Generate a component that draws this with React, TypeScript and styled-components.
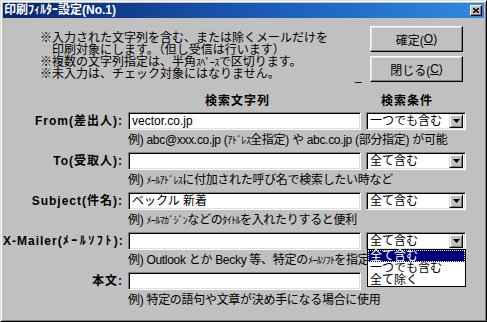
import React from 'react';
import styled, { createGlobalStyle } from 'styled-components';

const GlobalStyle = createGlobalStyle`
  html, body {
    margin: 0;
    padding: 0;
    background: #c0c0c0;
  }
  body {
    font-family: "Liberation Sans", "Noto Sans CJK JP", sans-serif;
    font-size: 12px;
    color: #000;
  }
`;

const Window = styled.div`
  box-sizing: border-box;
  width: 487px;
  height: 322px;
  display: flex;
  flex-direction: column;
  padding: 2px;
  background: #c0c0c0;
  border: 1px solid;
  border-color: #dfdfdf #000 #000 #dfdfdf;
  box-shadow: inset 1px 1px #fff, inset -1px -1px #808080;
  overflow: hidden;
`;

const TitleBar = styled.div`
  display: flex;
  align-items: center;
  justify-content: space-between;
  height: 15px;
  padding: 0 2px 0 1px;
  background: linear-gradient(90deg, #0a246a 0%, #1a5cb8 55%, #2f8ae0 100%);
`;

const TitleText = styled.span`
  color: #fff;
  font-weight: bold;
  font-size: 12px;
  line-height: 15px;
  white-space: nowrap;
`;

const CloseButton = styled.div`
  box-sizing: border-box;
  width: 12px;
  height: 11px;
  display: flex;
  align-items: center;
  justify-content: center;
  background: #c0c0c0;
  border: 1px solid;
  border-color: #fff #000 #000 #fff;
  box-shadow: inset -1px -1px #808080;
`;

const Body = styled.div`
  display: flex;
  flex-direction: column;
`;

const TopSection = styled.div`
  display: flex;
  padding: 8px 21px 0 37px;
`;

const Notes = styled.div`
  flex: 1;
  margin-top: 6px;
  line-height: 12px;
  white-space: nowrap;
`;

const NoteLine = styled.div<{ $indent?: boolean }>`
  padding-left: ${({ $indent }) => ($indent ? '12px' : '0')};
`;

// half-width katakana is narrow in the original dialog font
const SmallKana = styled.span`
  font-size: 10px;
  letter-spacing: -0.6px;
  line-height: 0;
`;

const WideKana = styled.span`
  letter-spacing: 2.5px;
`;

const Caret = styled.span`
  align-self: flex-end;
  width: 6px;
  margin-right: 9px;
  line-height: 12px;
`;

const ButtonColumn = styled.div`
  display: flex;
  flex-direction: column;
  gap: 4px;
  width: 93px;
`;

const Button = styled.div`
  box-sizing: border-box;
  height: 26px;
  display: flex;
  align-items: center;
  justify-content: center;
  background: #c0c0c0;
  border: 1px solid;
  border-color: #fff #000 #000 #fff;
  box-shadow: inset -1px -1px #808080, inset 1px 1px #dfdfdf;
  font-size: 12px;
  white-space: nowrap;

  u {
    text-underline-offset: 1px;
  }
`;

const Form = styled.div`
  display: grid;
  grid-template-columns: 120px 233px 100px;
  column-gap: 5px;
  margin-top: 13px;
`;

const Header = styled.div<{ $col: number; $shift: number }>`
  grid-column: ${({ $col }) => $col};
  margin-bottom: 5px;
  padding-right: ${({ $shift }) => $shift}px;
  text-align: center;
  font-weight: bold;
  letter-spacing: 1px;
  line-height: 12px;
`;

const Label = styled.div`
  grid-column: 1;
  text-align: right;
  font-weight: bold;
  letter-spacing: 1px;
  line-height: 18px;
  white-space: nowrap;
`;

const sunken = `
  box-sizing: border-box;
  height: 18px;
  background: #fff;
  border: 1px solid;
  border-color: #808080 #fff #fff #808080;
  box-shadow: inset 1px 1px #000, inset -1px -1px #dfdfdf;
`;

const TextBox = styled.div`
  ${sunken}
  grid-column: 2;
  padding: 0 3px;
  line-height: 16px;
  white-space: nowrap;
  overflow: hidden;
`;

const SelectBox = styled.div`
  ${sunken}
  grid-column: 3;
  position: relative;
  display: flex;
  align-items: center;
  padding: 2px 2px 2px 3px;
  line-height: 14px;
`;

const SelectValue = styled.span`
  flex: 1;
  white-space: nowrap;
`;

const DropButton = styled.div`
  box-sizing: border-box;
  width: 14px;
  height: 14px;
  display: flex;
  align-items: center;
  justify-content: center;
  background: #c0c0c0;
  border: 1px solid;
  border-color: #dfdfdf #000 #000 #dfdfdf;
  box-shadow: inset 1px 1px #fff, inset -1px -1px #808080;
`;

const DropList = styled.div`
  position: absolute;
  top: 100%;
  left: 0;
  right: -1px;
  z-index: 2;
  background: #fff;
  border: 1px solid #000;
`;

const Option = styled.div<{ $active?: boolean }>`
  height: 12px;
  padding: 0 2px;
  line-height: 12px;
  white-space: nowrap;
  background: ${({ $active }) => ($active ? '#000080' : '#fff')};
  color: ${({ $active }) => ($active ? '#fff' : '#000')};
  outline: ${({ $active }) => ($active ? '1px dotted #ffff7f' : 'none')};
  outline-offset: -1px;
`;

const Hint = styled.div`
  grid-column: 2 / span 2;
  height: 12px;
  margin: 4px 0 6px;
  line-height: 12px;
  letter-spacing: -0.3px;
  white-space: nowrap;
`;

const Arrow = () => (
  <svg width="7" height="4" viewBox="0 0 7 4">
    <polygon points="0,0 7,0 3.5,4" fill="#000" />
  </svg>
);

const CloseIcon = () => (
  <svg width="6" height="5" viewBox="0 0 6 5">
    <path d="M0 0L6 5M6 0L0 5" stroke="#000" strokeWidth="1.4" />
  </svg>
);

const withKana = (text: string, Wrap: typeof SmallKana) =>
  text.split(/([\uFF61-\uFF9F]+)/).map((part, i) =>
    i % 2 === 1 ? <Wrap key={i}>{part}</Wrap> : part
  );

const OPTIONS = ['全て含む', '一つでも含む', '全て除く'];

type FieldProps = {
  label: string;
  value?: string;
  condition?: string;
  hint: string;
  open?: boolean;
};

const Field = ({ label, value, condition, hint, open }: FieldProps) => (
  <>
    <Label>{withKana(label, WideKana)}</Label>
    <TextBox>{value}</TextBox>
    {condition && (
      <SelectBox>
        <SelectValue>{condition}</SelectValue>
        <DropButton>
          <Arrow />
        </DropButton>
        {open && (
          <DropList>
            {OPTIONS.map(o => (
              <Option key={o} $active={o === condition}>
                {o}
              </Option>
            ))}
          </DropList>
        )}
      </SelectBox>
    )}
    <Hint>{withKana(hint, SmallKana)}</Hint>
  </>
);

export default function App() {
  return (
    <>
      <GlobalStyle />
      <Window>
        <TitleBar>
          <TitleText>印刷ﾌｨﾙﾀｰ設定(No.1)</TitleText>
          <CloseButton>
            <CloseIcon />
          </CloseButton>
        </TitleBar>
        <Body>
          <TopSection>
            <Notes>
              <NoteLine>※入力された文字列を含む、または除くメールだけを</NoteLine>
              <NoteLine $indent>印刷対象にします。（但し受信は行います）</NoteLine>
              <NoteLine>{withKana('※複数の文字列指定は、半角ｽﾍﾟｰｽで区切ります。', SmallKana)}</NoteLine>
              <NoteLine>※未入力は、チェック対象にはなりません。</NoteLine>
            </Notes>
            <Caret>_</Caret>
            <ButtonColumn>
              <Button>
                確定(<u>O</u>)
              </Button>
              <Button>
                閉じる(<u>C</u>)
              </Button>
            </ButtonColumn>
          </TopSection>
          <Form>
            <Header $col={2} $shift={14}>
              検索文字列
            </Header>
            <Header $col={3} $shift={18}>
              検索条件
            </Header>
            <Field
              label="From(差出人):"
              value="vector.co.jp"
              condition="一つでも含む"
              hint="例) abc@xxx.co.jp (ｱﾄﾞﾚｽ全指定) や abc.co.jp (部分指定) が可能"
            />
            <Field
              label="To(受取人):"
              condition="全て含む"
              hint="例) ﾒｰﾙｱﾄﾞﾚｽに付加された呼び名で検索したい時など"
            />
            <Field
              label="Subject(件名):"
              value="ベックル 新着"
              condition="全て含む"
              hint="例) ﾒｰﾙﾏｶﾞｼﾞﾝなどのﾀｲﾄﾙを入れたりすると便利"
            />
            <Field
              label="X-Mailer(ﾒｰﾙｿﾌﾄ):"
              condition="全て含む"
              open
              hint="例) Outlook とか Becky 等、特定のﾒｰﾙｿﾌﾄを指定したい時など"
            />
            <Field label="本文:" hint="例) 特定の語句や文章が決め手になる場合に使用" />
          </Form>
        </Body>
      </Window>
    </>
  );
}
